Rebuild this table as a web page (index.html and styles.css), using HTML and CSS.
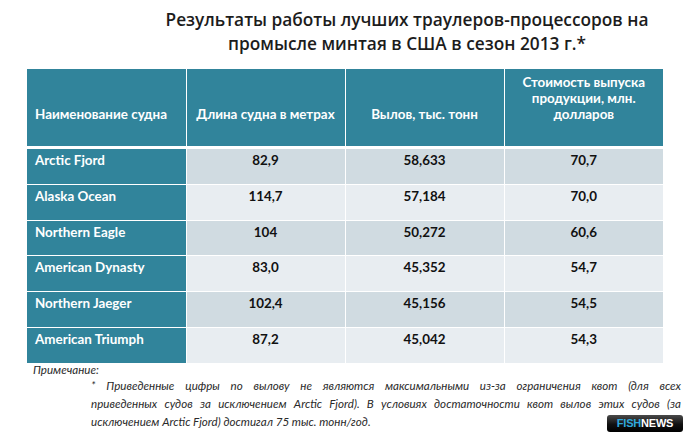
FILE: index.html
```html
<!DOCTYPE html>
<html lang="ru">
<head>
<meta charset="utf-8">
<title>Траулеры-процессоры</title>
<link rel="stylesheet" href="styles.css">
</head>
<body>
<div class="page">
  <h1 class="title">Результаты работы лучших траулеров-процессоров на<br>промысле минтая в США в сезон 2013 г.*</h1>
  <table class="data">
    <thead>
      <tr>
        <th class="name">Наименование судна</th>
        <th>Длина судна в метрах</th>
        <th>Вылов, тыс. тонн</th>
        <th>Стоимость выпуска продукции, млн. долларов</th>
      </tr>
    </thead>
    <tbody>
      <tr class="odd"><td class="name">Arctic Fjord</td><td>82,9</td><td>58,633</td><td>70,7</td></tr>
      <tr class="even"><td class="name">Alaska Ocean</td><td>114,7</td><td>57,184</td><td>70,0</td></tr>
      <tr class="odd"><td class="name">Northern Eagle</td><td>104</td><td>50,272</td><td>60,6</td></tr>
      <tr class="even"><td class="name">American Dynasty</td><td>83,0</td><td>45,352</td><td>54,7</td></tr>
      <tr class="odd"><td class="name">Northern Jaeger</td><td>102,4</td><td>45,156</td><td>54,5</td></tr>
      <tr class="even"><td class="name">American Triumph</td><td>87,2</td><td>45,042</td><td>54,3</td></tr>
    </tbody>
  </table>
  <div class="note">
    <div class="note-label">Примечание:</div>
    <p class="note-text"><span class="jl">* Приведенные цифры по вылову не являются максимальными из-за ограничения квот (для всех</span><span class="jl">приведенных судов за исключением Arctic Fjord). В условиях достаточности квот вылов этих судов (за</span><span class="last">исключением Arctic Fjord) достигал 75 тыс. тонн/год.</span></p>
  </div>
  <div class="badge"><span class="fish">FISH</span><span class="news">NEWS</span></div>
</div>
</body>
</html>
```

FILE: styles.css
```css
html, body {
  margin: 0;
  padding: 0;
  background: #ffffff;
}

.page {
  position: relative;
  width: 692px;
  height: 444px;
  overflow: hidden;
  font-family: "Lato", "Open Sans", sans-serif;
}

.title {
  margin: 8px 0 0 122px;
  font-family: "Open Sans", sans-serif;
  font-size: 17.3px;
  line-height: 24px;
  font-weight: 600;
  color: #1c1c1c;
  text-align: center;
}

.data {
  margin: 13px 0 0 27px;
  width: 636px;
  border-collapse: collapse;
  table-layout: fixed;
  font-size: 13.4px;
  font-weight: bold;
}

.data th {
  background: #31849b;
  color: #ffffff;
  height: 53px;
  padding: 0 8px 24px;
  line-height: 16px;
  vertical-align: bottom;
  text-align: center;
  border-left: 1px solid #ffffff;
  border-bottom: 3px solid #ffffff;
}

.data td {
  height: 31.75px;
  padding: 3px 8px 0;
  line-height: 16px;
  vertical-align: top;
  text-align: center;
  color: #111111;
  border-left: 1px solid #ffffff;
  border-bottom: 1px solid #ffffff;
}

.data tr:last-child td {
  border-bottom: none;
}

.data th:first-child,
.data td:first-child {
  border-left: none;
}

.data .name {
  text-align: left;
}

.data td.name {
  background: #31849b;
  color: #ffffff;
}

.odd td {
  background: #d0dbe1;
}

.even td {
  background: #e8edf1;
}

.note {
  font-style: italic;
  font-size: 11.6px;
  color: #2a2a2a;
}

.note-label {
  margin-left: 33px;
  line-height: 14px;
}

.note-text {
  margin: 0 11px 0 91px;
  line-height: 18px;
}

.jl {
  display: block;
  text-align: justify;
  text-align-last: justify;
}

.last {
  display: block;
}

.badge {
  position: absolute;
  left: 607px;
  top: 415px;
  width: 76px;
  height: 17px;
  border-radius: 3px;
  background: linear-gradient(#4a4a4a, #111111 55%, #000000);
  font-family: "Liberation Sans", Arial, sans-serif;
  font-weight: bold;
  font-size: 11px;
  line-height: 17px;
  text-align: center;
  letter-spacing: -0.2px;
}

.fish {
  color: #2fa8dc;
}

.news {
  color: #ffffff;
}
```
